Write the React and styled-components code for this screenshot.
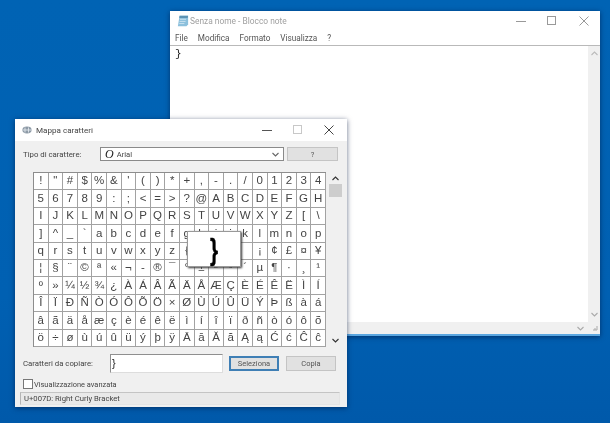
import React from "react";
import styled, { createGlobalStyle } from "styled-components";

const Global = createGlobalStyle`
  html, body { margin: 0; padding: 0; width: 610px; height: 423px; overflow: hidden; background: #0061b3; }
  * { box-sizing: border-box; }
`;

const Desktop = styled.div`
  position: relative;
  width: 610px;
  height: 423px;
  overflow: hidden;
  background: linear-gradient(180deg, #0063b4 0%, #0060b2 70%, #0059aa 100%);
  font-family: Roboto, "Noto Sans", sans-serif;
  filter: blur(0.5px);
`;

const Win = styled.div`
  position: absolute;
  left: ${(p) => p.$x}px;
  top: ${(p) => p.$y}px;
  width: ${(p) => p.$w}px;
  height: ${(p) => p.$h}px;
  display: flex;
  flex-direction: column;
  background: ${(p) => p.$bg};
  box-shadow: 0 1px 5px rgba(0, 20, 60, 0.6);
  z-index: ${(p) => p.$z};
`;

const TitleBar = styled.div`
  flex: none;
  height: ${(p) => p.$h}px;
  display: flex;
  align-items: center;
  padding-left: ${(p) => p.$pad}px;
  gap: ${(p) => p.$gap}px;
  background: #fff;
`;

const Title = styled.span`
  flex: 1;
  font-size: ${(p) => p.$size}px;
  color: ${(p) => p.$color};
  white-space: nowrap;
`;

const Controls = styled.div`
  display: flex;
  align-items: center;
  height: 100%;
`;

const Ctl = styled.div`
  width: ${(p) => p.$w}px;
  height: 100%;
  display: flex;
  align-items: center;
  justify-content: center;
`;

const Menu = styled.div`
  flex: none;
  height: 15px;
  display: flex;
  align-items: center;
  gap: 10px;
  padding-left: 5px;
  background: #fff;
  border-bottom: 1px solid #b9b9b9;
  font-size: 8.2px;
  color: #555;
`;

const NoteBody = styled.div`
  flex: 1;
  display: flex;
  flex-direction: column;
  min-height: 0;
`;

const NoteMain = styled.div`
  flex: 1;
  display: flex;
  min-height: 0;
`;

const NoteText = styled.div`
  flex: 1;
  background: #fff;
  padding: 1px 0 0 5px;
  font-family: "Liberation Mono", monospace;
  font-size: 11px;
  line-height: 15px;
  color: #222;
`;

const VScroll = styled.div`
  flex: none;
  width: 12px;
  background: #f0f0f0;
  display: flex;
  flex-direction: column;
  justify-content: space-between;
  align-items: center;
  padding: 5px 0 5px;
`;

const HScroll = styled.div`
  flex: none;
  height: 12px;
  background: #f0f0f0;
  display: flex;
  justify-content: flex-end;
  align-items: center;
  padding-right: 2px;
  gap: 8px;
`;

const WinBottom = styled.div`
  flex: none;
  height: 2px;
  background: #5aa6e0;
`;

const MapBody = styled.div`
  flex: 1;
  display: flex;
  flex-direction: column;
  padding: 6px 8px 2px 8px;
  min-height: 0;
`;

const Row = styled.div`
  display: flex;
  align-items: center;
`;

const FontRow = styled(Row)`
  height: 16px;
`;

const Label = styled.span`
  font-size: ${(p) => p.$size || 7.8}px;
  color: #444;
  white-space: nowrap;
  width: ${(p) => p.$w}px;
  flex: none;
`;

const Select = styled.div`
  width: 184px;
  height: 14px;
  display: flex;
  align-items: center;
  background: #fff;
  border: 1px solid #8a8a8a;
  padding: 0 4px;
  gap: 3px;
`;

const FontGlyph = styled.span`
  font-family: "Liberation Serif", serif;
  font-style: italic;
  font-size: 12px;
  color: #222;
`;

const SelectText = styled.span`
  flex: 1;
  font-size: 7.6px;
  color: #444;
`;

const Btn = styled.div`
  flex: none;
  width: ${(p) => p.$w}px;
  height: ${(p) => p.$h}px;
  margin-left: ${(p) => p.$ml}px;
  display: flex;
  align-items: center;
  justify-content: center;
  background: #e1e1e1;
  border: ${(p) => (p.$focus ? "2px solid #3f7fb5" : "1px solid #c4c4c4")};
  font-size: 7.5px;
  color: #555;
`;

const GridRow = styled.div`
  display: flex;
  margin: 11px 0 0 10px;
  height: 175px;
`;

const GridWrap = styled.div`
  position: relative;
  width: 293px;
  height: 175px;
`;

const CharGrid = styled.div`
  width: 293px;
  height: 175px;
  display: grid;
  grid-template-columns: repeat(20, 1fr);
  grid-template-rows: repeat(10, 1fr);
  border-top: 1px solid #8d8d8d;
  border-left: 1px solid #8d8d8d;
  background: #fff;
`;

const Cell = styled.div`
  display: flex;
  align-items: center;
  justify-content: center;
  border-right: 1px solid #a2a2a2;
  border-bottom: 1px solid #a2a2a2;
  font-family: "Liberation Sans", Arial, sans-serif;
  font-size: 11.5px;
  color: #444;
  line-height: 1;
  overflow: hidden;
`;

const Popup = styled.div`
  position: absolute;
  left: 154px;
  top: 59px;
  width: 54px;
  height: 36px;
  background: #fff;
  border: 1px solid #999;
  box-shadow: 1px 1px 2px #333;
  display: flex;
  align-items: center;
  justify-content: center;
`;

const PopupGlyph = styled.span`
  display: inline-block;
  font-family: "Liberation Sans", Arial, sans-serif;
  font-size: 29px;
  font-weight: 700;
  color: #000;
  line-height: 1;
  -webkit-text-stroke: 0.4px #000;
  transform: translate(0.5px, 1px) scaleX(0.72);
`;

const GridScroll = styled.div`
  flex: none;
  width: 13px;
  margin-left: 3px;
  height: 175px;
  display: flex;
  flex-direction: column;
  align-items: center;
  padding-top: 4px;
  padding-bottom: 4px;
`;

const Thumb = styled.div`
  width: 13px;
  height: 13px;
  margin-top: 3px;
  background: #cdcdcd;
`;

const ScrollGap = styled.div`
  flex: 1;
`;

const CopyRow = styled(Row)`
  margin-top: 7px;
  height: 19px;
`;

const CopyInput = styled.div`
  flex: none;
  width: 113px;
  height: 19px;
  background: #fff;
  border: 1px solid #8f8f8f;
  border-right-color: #ddd;
  border-bottom-color: #ddd;
  padding-left: 1px;
  font-family: "Liberation Sans", Arial, sans-serif;
  font-size: 11px;
  line-height: 17px;
  color: #222;
`;

const AdvRow = styled(Row)`
  margin-top: 6px;
  height: 10px;
  gap: 1px;
`;

const Check = styled.div`
  flex: none;
  width: 10px;
  height: 10px;
  background: #fff;
  border: 1px solid #777;
`;

const Status = styled.div`
  flex: none;
  height: 13px;
  margin: 3px 0 0 -3px;
  width: 320px;
  padding-left: 3px;
  display: flex;
  align-items: center;
  background: #e9e9e9;
  border: 1px solid #e4e4e4;
  border-left-color: #b5b5b5;
  border-top-color: #c4c4c4;
  font-size: 7.7px;
  color: #444;
  white-space: nowrap;
`;

const rows = [
  `! " # $ % & ' ( ) * + , - . / 0 1 2 3 4`,
  `5 6 7 8 9 : ; < = > ? @ A B C D E F G H`,
  `I J K L M N O P Q R S T U V W X Y Z [ \\`,
  "] ^ _ ` a b c d e f g h i j k l m n o p",
  "q r s t u v w x y z { | } ~ \u00A0 ¡ ¢ £ ¤ ¥",
  "¦ § ¨ © ª « ¬ - ® ¯ ° ± ² ³ ´ µ ¶ · ¸ ¹",
  "º » ¼ ½ ¾ ¿ À Á Â Ã Ä Å Æ Ç È É Ê Ë Ì Í",
  "Î Ï Ð Ñ Ò Ó Ô Õ Ö × Ø Ù Ú Û Ü Ý Þ ß à á",
  "â ã ä å æ ç è é ê ë ì í î ï ð ñ ò ó ô õ",
  "ö ÷ ø ù ú û ü ý þ ÿ Ā ā Ă ă Ą ą Ć ć Ĉ ĉ",
];
const chars = rows.flatMap((r) => r.split(" "));

const Min = ({ c = "#777" }) => (
  <svg width="10" height="10" viewBox="0 0 10 10"><path d="M0 5.5h10" stroke={c} fill="none" /></svg>
);
const Max = ({ c = "#777" }) => (
  <svg width="10" height="10" viewBox="0 0 10 10"><rect x=".5" y=".5" width="8" height="8" stroke={c} fill="none" /></svg>
);
const Close = ({ c = "#666" }) => (
  <svg width="10" height="10" viewBox="0 0 10 10"><path d="M.5.5l9 9M9.5.5l-9 9" stroke={c} fill="none" /></svg>
);
const Chev = ({ up, c = "#555", w = 7 }) => (
  <svg width={w} height="5" viewBox="0 0 7 5">
    <path d={up ? "M.5 4L3.5 1l3 3" : "M.5 1l3 3 3-3"} stroke={c} strokeWidth="1.1" fill="none" />
  </svg>
);

const NotepadIcon = () => (
  <svg width="12" height="12" viewBox="0 0 14 14">
    <path d="M3 1h10v10l-2 2H1z" fill="#8cc0dc" />
    <path d="M3 1h10l-.6 2.4H2.6z" fill="#5c93b4" />
    <path d="M3.5 5h7M3 7.5h7M2.6 10h6" stroke="#e4f1f8" strokeWidth=".8" />
  </svg>
);

const MapIcon = () => (
  <svg width="10" height="8" viewBox="0 0 10 8">
    <ellipse cx="5" cy="4" rx="4.6" ry="3.4" fill="#8d9aa6" />
    <path d="M3 1.5v5M6.5 1.5v5M.8 4h8.4" stroke="#e8eef2" strokeWidth=".8" />
  </svg>
);

export default function App() {
  return (
    <Desktop>
      <Global />
      <Win $x={170} $y={11} $w={430} $h={325} $bg="#fff" $z={1}>
        <TitleBar $h={20} $pad={7} $gap={1}>
          <NotepadIcon />
          <Title $size={8.4} $color="#a0a0a0">Senza nome - Blocco note</Title>
          <Controls>
            <Ctl $w={31}><Min c="#999" /></Ctl>
            <Ctl $w={32}><Max c="#999" /></Ctl>
            <Ctl $w={32}><Close c="#999" /></Ctl>
          </Controls>
        </TitleBar>
        <Menu>
          <span>File</span><span>Modifica</span><span>Formato</span><span>Visualizza</span><span>?</span>
        </Menu>
        <NoteBody>
          <NoteMain>
            <NoteText>{"}"}</NoteText>
            <VScroll>
              <Chev up c="#bbb" />
              <Chev c="#aaa" />
            </VScroll>
          </NoteMain>
          <HScroll>
            <Chev c="#aaa" w={7} />
            <svg width="6" height="6" viewBox="0 0 6 6"><path d="M5 1v4M3 3v2M1 5h4" stroke="#aaa" fill="none" /></svg>
          </HScroll>
          <WinBottom />
        </NoteBody>
      </Win>

      <Win $x={15} $y={119} $w={332} $h={288} $bg="#f0f0f0" $z={2}>
        <TitleBar $h={22} $pad={7} $gap={4}>
          <MapIcon />
          <Title $size={8.1} $color="#444">Mappa caratteri</Title>
          <Controls>
            <Ctl $w={31}><Min c="#555" /></Ctl>
            <Ctl $w={31}><Max c="#c8c8c8" /></Ctl>
            <Ctl $w={32}><Close c="#444" /></Ctl>
            <Ctl $w={2} />
          </Controls>
        </TitleBar>
        <MapBody>
          <FontRow>
            <Label $w={77}>Tipo di carattere:</Label>
            <Select>
              <FontGlyph>O</FontGlyph>
              <SelectText>Arial</SelectText>
              <Chev c="#666" />
            </Select>
            <Btn $w={51} $h={14} $ml={3}>?</Btn>
          </FontRow>
          <GridRow>
            <GridWrap>
              <CharGrid>
                {chars.map((c, i) => <Cell key={i}>{c}</Cell>)}
              </CharGrid>
              <Popup><PopupGlyph>{"}"}</PopupGlyph></Popup>
            </GridWrap>
            <GridScroll>
              <Chev up c="#333" />
              <Thumb />
              <ScrollGap />
              <Chev c="#333" />
            </GridScroll>
          </GridRow>
          <CopyRow>
            <Label $w={87}>Caratteri da copiare:</Label>
            <CopyInput>{"}"}</CopyInput>
            <Btn $w={50} $h={15} $ml={6} $focus>Seleziona</Btn>
            <Btn $w={50} $h={15} $ml={7}>Copia</Btn>
          </CopyRow>
          <AdvRow>
            <Check />
            <Label $size={7.4}>Visualizzazione avanzata</Label>
          </AdvRow>
          <Status>U+007D: Right Curly Bracket</Status>
        </MapBody>
      </Win>
    </Desktop>
  );
}
